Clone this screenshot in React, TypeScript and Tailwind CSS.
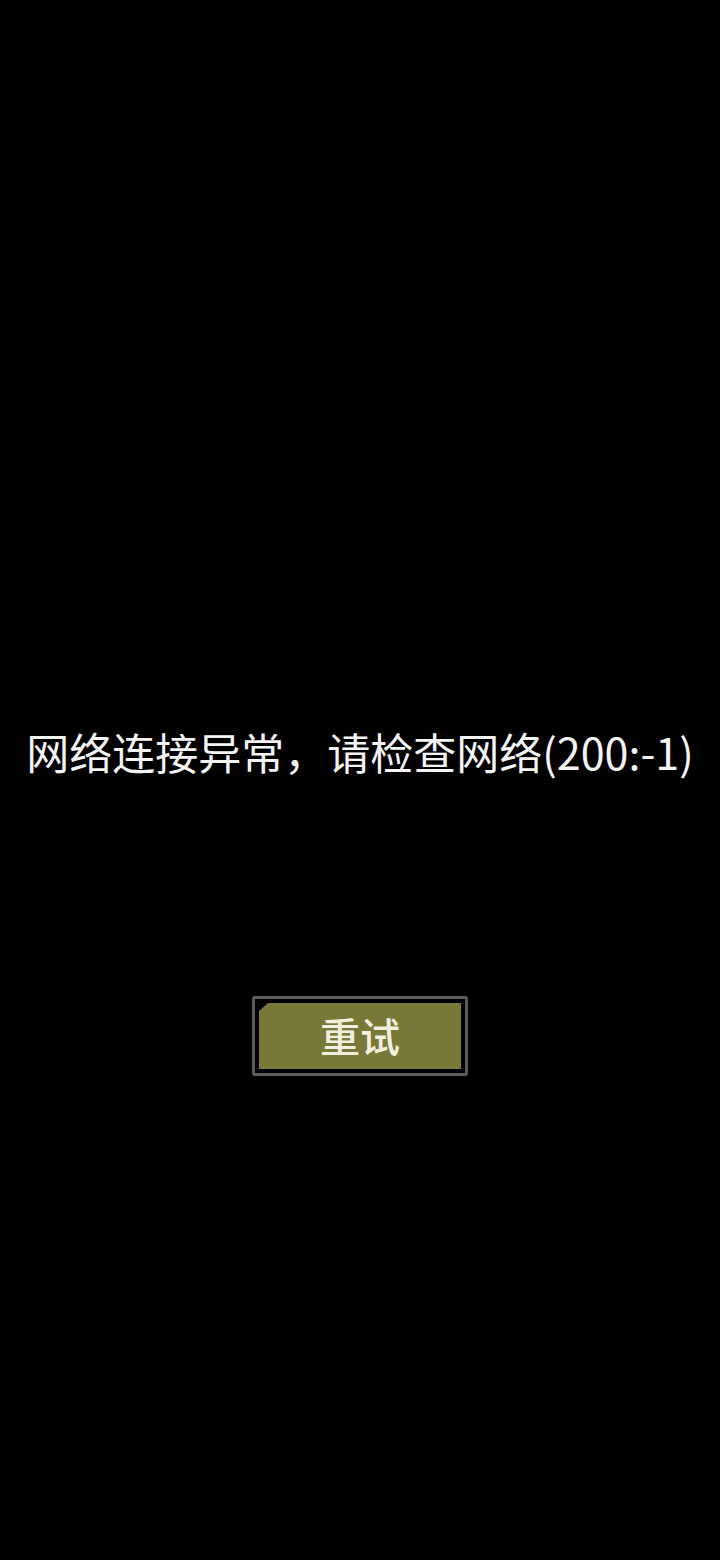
export default function App() {
  return (
    <div
      className="w-[720px] h-[1560px] bg-black flex flex-col items-center"
      style={{ fontFamily: '"Noto Sans CJK SC", "Noto Sans", sans-serif' }}
    >
      <div className="mt-[721px] text-[43px] leading-[60px] text-[#f4f4f4] whitespace-nowrap">
        网络连接异常，请检查网络(200:-1)
      </div>
      <div className="mt-[215px] w-[216px] h-[80px] border-[3px] border-[#5a5a5a] rounded-[3px] p-[4px] bg-black">
        <div className="w-full h-full bg-[#787839] [clip-path:polygon(9px_0,100%_0,100%_100%,0_100%,0_8px)] flex items-center justify-center">
          <span className="text-[40px] leading-none font-medium text-[#f3efdf] -mt-[3px]">重试</span>
        </div>
      </div>
    </div>
  );
}
